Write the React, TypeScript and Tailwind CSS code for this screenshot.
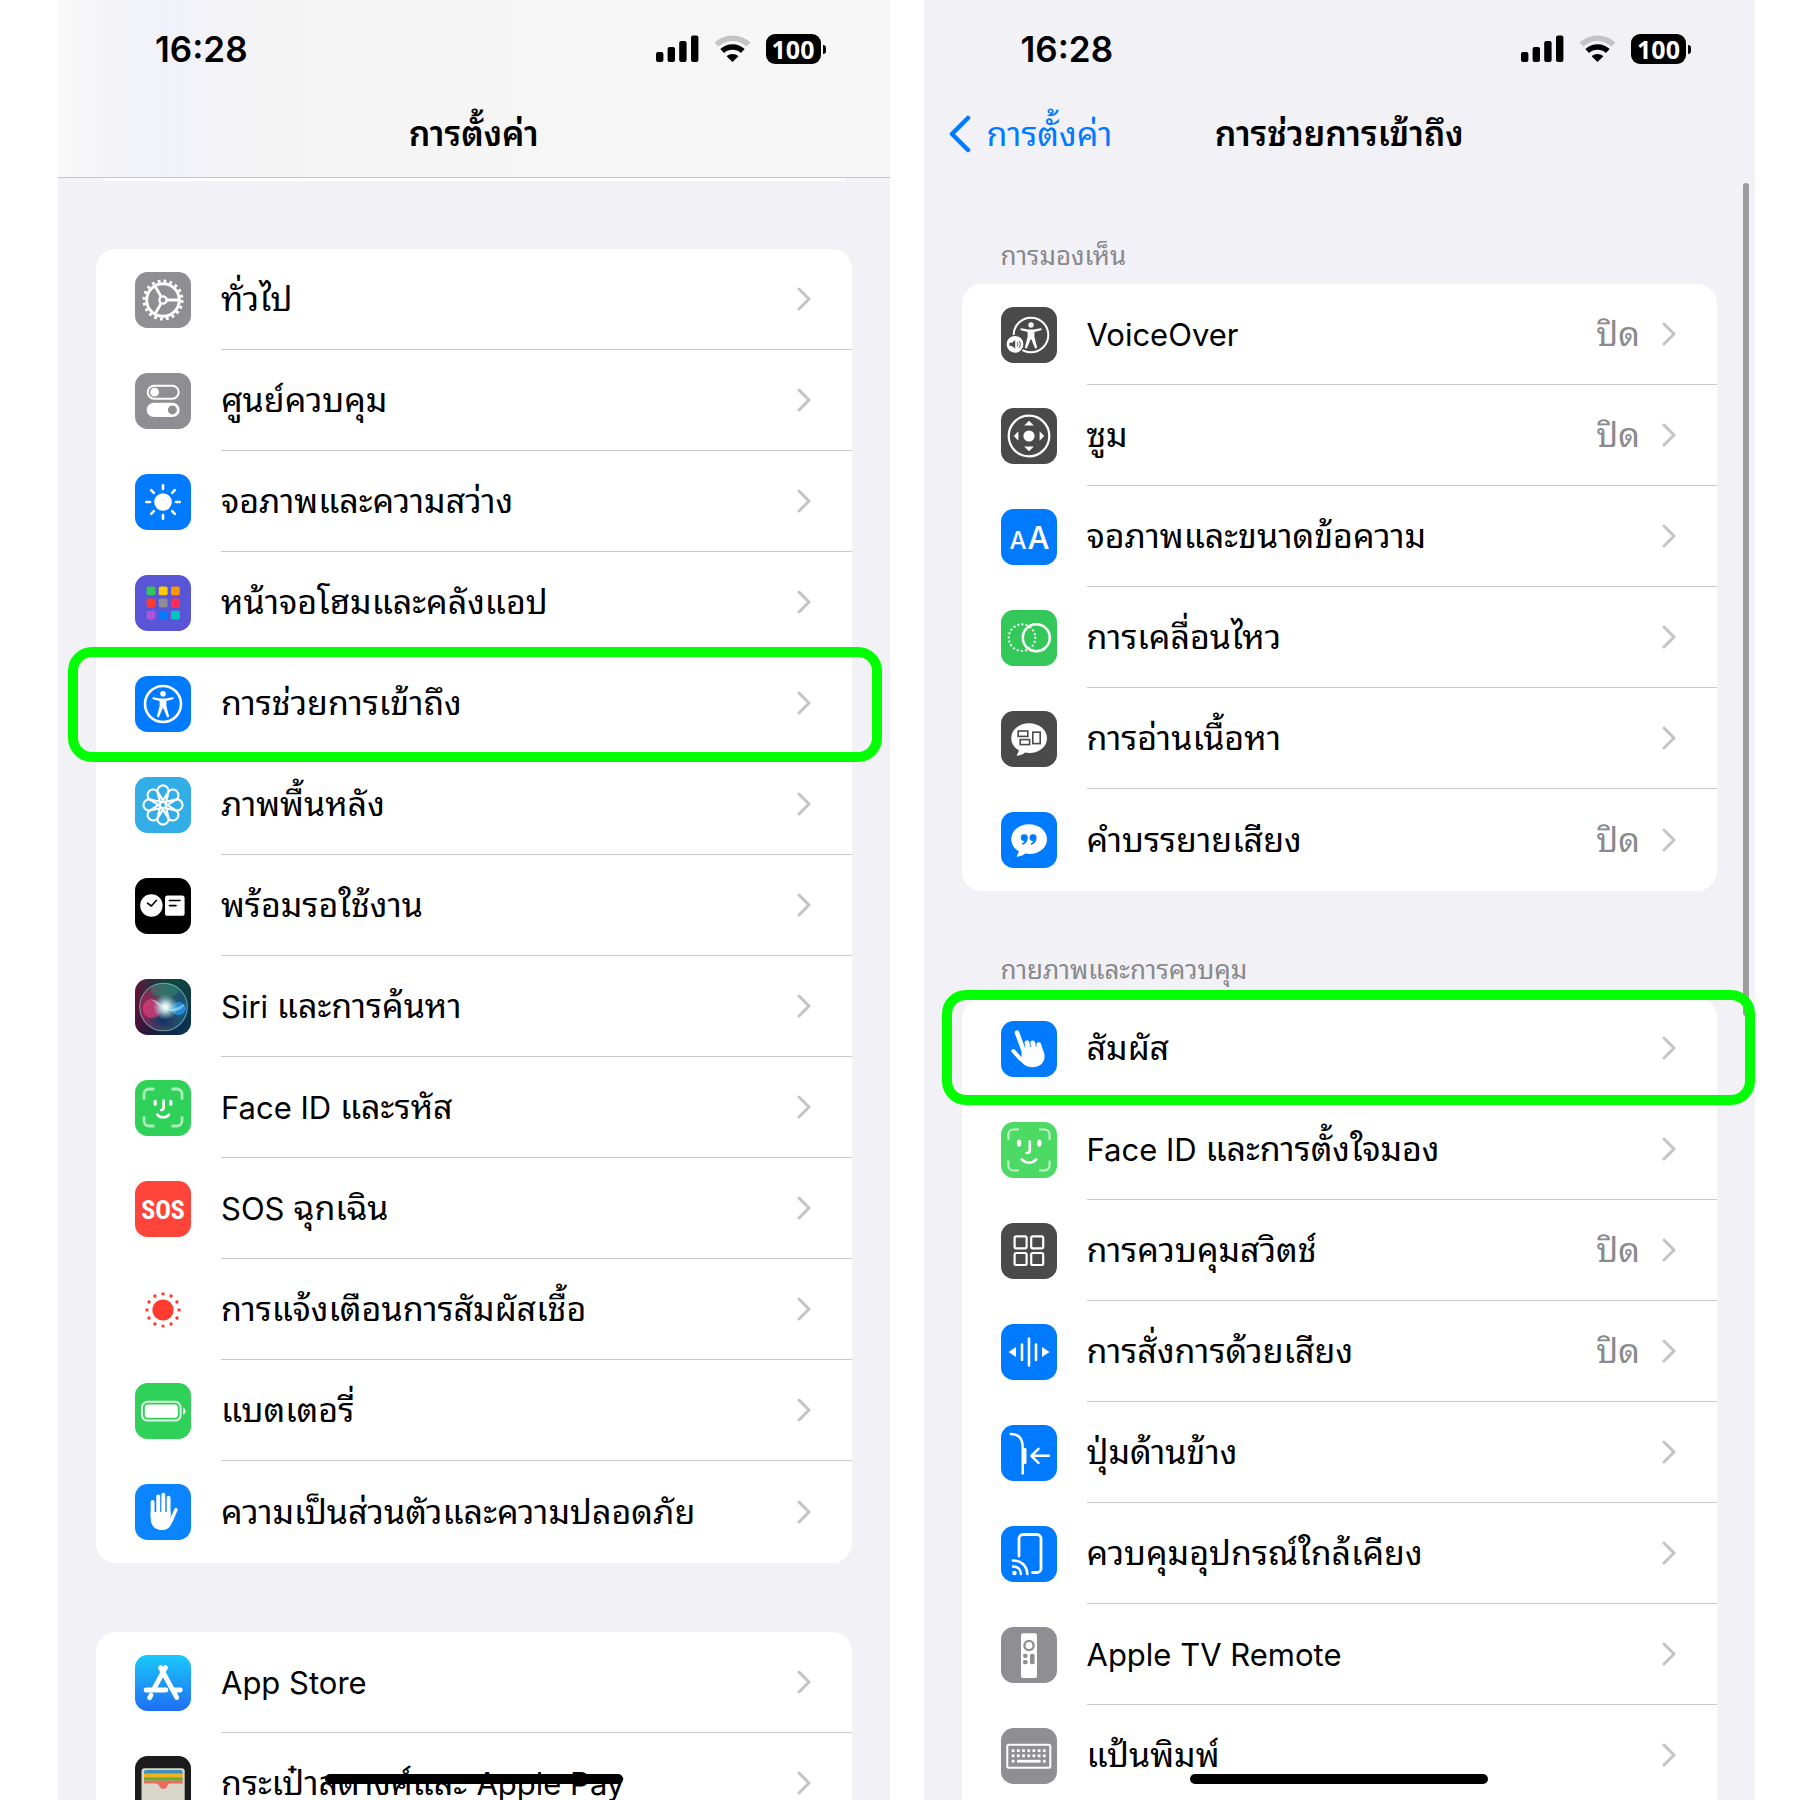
import React from "react";

const DARK = "#4a4a4a";
const BLUE = "#007aff";
const GRAY = "#8e8e93";

type RowItem = {
  id: string;
  label: string;
  icon: React.ReactNode;
  value?: string;
  ring?: string;
};

const Tile = ({ bg, children }: { bg: string; children?: React.ReactNode }) => (
  <svg
    viewBox="0 0 56 56"
    className="size-14 shrink-0"
    fill="none"
    strokeLinecap="round"
    strokeLinejoin="round"
    aria-hidden="true"
  >
    <rect width="56" height="56" rx="12.5" fill={bg} />
    {children}
  </svg>
);

const GearIcon = () => (
  <Tile bg={GRAY}>
    <g stroke="#fff">
      <circle cx="28" cy="28" r="19" strokeWidth="3" strokeDasharray="2.8 3.169" strokeLinecap="butt" />
      <circle cx="28" cy="28" r="16.3" strokeWidth="3" />
      <circle cx="28" cy="28" r="3.6" strokeWidth="2.4" />
      <path d="M32 28H44M26 24.5L20 14M26 31.5L20 42" strokeWidth="2.8" />
    </g>
  </Tile>
);

const TogglesIcon = () => (
  <Tile bg={GRAY}>
    <rect x="12.7" y="12.7" width="31" height="13" rx="6.5" stroke="#fff" strokeWidth="2" />
    <circle cx="19.6" cy="19.2" r="4.4" fill="#fff" />
    <rect x="11.7" y="29.7" width="33" height="14.4" rx="7.2" fill="#fff" />
    <circle cx="37.4" cy="36.9" r="4.5" fill={GRAY} />
  </Tile>
);

const SunIcon = () => (
  <Tile bg={BLUE}>
    <circle cx="28" cy="28" r="8.8" fill="#fff" />
    {[0, 45, 90, 135, 180, 225, 270, 315].map((a) => (
      <path key={a} d="M28 11.3V15" stroke="#fff" strokeWidth="2.6" transform={`rotate(${a} 28 28)`} />
    ))}
  </Tile>
);

const HomeGridIcon = () => {
  const colors = [
    "#34c759", "#ffcc00", "#ff9500",
    "#ff3b30", "#8e8e93", "#ff2d55",
    "#af52de", "#007aff", "#00c7be",
  ];
  return (
    <Tile bg="#5856d6">
      {colors.map((c, i) => (
        <rect
          key={c}
          x={11.6 + (i % 3) * 12.2}
          y={11.4 + Math.floor(i / 3) * 12.2}
          width="8.8"
          height="8.8"
          rx="1.8"
          fill={c}
        />
      ))}
    </Tile>
  );
};

const PERSON =
  "M18.6 21.2L25 22.6H31L37.4 21.2C38.8 21 39.2 22.8 37.9 23.2L31.4 24.9V30L34 40C34.3 41.5 32.3 42 31.8 40.7L28.5 32.5H27.5L24.2 40.7C23.7 42 21.7 41.5 22 40L24.6 30V24.9L18.1 23.2C16.8 22.8 17.2 21 18.6 21.2Z";

const AccessibilityIcon = () => (
  <Tile bg={BLUE}>
    <circle cx="28" cy="28" r="18" stroke="#fff" strokeWidth="2.6" />
    <circle cx="28" cy="17.8" r="2.8" fill="#fff" />
    <path d={PERSON} fill="#fff" />
  </Tile>
);

const FlowerIcon = () => (
  <Tile bg="#32ade6">
    {[0, 45, 90, 135, 180, 225, 270, 315].map((a) => (
      <path
        key={a}
        d="M25.6 28L22.6 15.5A5.6 5.6 0 1 1 33.4 15.5L30.4 28"
        stroke="#fff"
        strokeWidth="2.1"
        transform={`rotate(${a} 28 28)`}
      />
    ))}
    <circle cx="28" cy="28" r="2" fill="#32ade6" />
  </Tile>
);

const StandbyIcon = () => (
  <Tile bg="#000">
    <circle cx="16.4" cy="27.5" r="11.2" fill="#fff" />
    <path d="M12.5 25.2L16.3 28L21.5 22.3" stroke="#000" strokeWidth="1.6" />
    <rect x="30" y="17.4" width="19.6" height="20.4" rx="2.6" fill="#fff" />
    <path d="M34.5 22.5H45M34.5 27.6H41" stroke="#000" strokeWidth="1.6" />
  </Tile>
);

const SiriIcon = () => (
  <Tile bg="url(#siriBg)">
    <defs>
      <linearGradient id="siriBg" x1="0" y1="0.3" x2="1" y2="0.7">
        <stop offset="0" stopColor="#6b0f38" />
        <stop offset="0.45" stopColor="#22183c" />
        <stop offset="1" stopColor="#0a3352" />
      </linearGradient>
      <radialGradient id="siriTop" cx="0.7" cy="0" r="0.8">
        <stop offset="0" stopColor="#0d4a40" />
        <stop offset="1" stopColor="#0d4a40" stopOpacity="0" />
      </radialGradient>
      <linearGradient id="siriOrb" x1="0.1" y1="0.5" x2="1" y2="0.5">
        <stop offset="0" stopColor="#a8285e" />
        <stop offset="0.45" stopColor="#4d5f68" />
        <stop offset="1" stopColor="#0f5d8c" />
      </linearGradient>
      <radialGradient id="siriGlow">
        <stop offset="0" stopColor="#fff" />
        <stop offset="0.3" stopColor="#dff" stopOpacity="0.85" />
        <stop offset="1" stopColor="#9ee" stopOpacity="0" />
      </radialGradient>
      <radialGradient id="siriDark">
        <stop offset="0" stopColor="#12306a" />
        <stop offset="1" stopColor="#12306a" stopOpacity="0" />
      </radialGradient>
    </defs>
    <rect width="56" height="56" rx="12.5" fill="url(#siriTop)" />
    <circle cx="28.5" cy="28" r="23.5" fill="url(#siriOrb)" opacity="0.75" />
    <ellipse cx="28" cy="42" rx="18" ry="11" fill="url(#siriDark)" />
    <ellipse cx="30" cy="11" rx="14" ry="7" fill="#2c8a70" opacity="0.5" />
    <circle cx="17" cy="29.5" r="9.5" fill="#e0407c" opacity="0.65" />
    <ellipse cx="43.5" cy="29.5" rx="7.5" ry="6.5" fill="#2a95ea" opacity="0.8" />
    <path d="M16 20C22 22 26 26 30 29C36 33 42 28 50 25C45 34 37 33 30 30C24 27 20 24 16 20Z" fill="#bff" opacity="0.5" />
    <circle cx="30.5" cy="28" r="12.5" fill="url(#siriGlow)" />
    <circle cx="28.5" cy="28" r="23.8" stroke="#7fc7ba" strokeWidth="1.1" opacity="0.75" />
  </Tile>
);

const FaceIdIcon = () => (
  <Tile bg="#30d158">
    <path
      d="M9 19.5V14A5 5 0 0 1 14 9H19.5M36.5 9H42A5 5 0 0 1 47 14V19.5M47 36.5V41A5 5 0 0 1 42 46H36.5M19.5 46H14A5 5 0 0 1 9 41V36.5"
      stroke="#fff"
      strokeWidth="2.8"
      strokeLinecap="butt"
      opacity="0.6"
    />
    <path d="M20.2 21.3V24.3M35.8 21.3V24.3" stroke="#fff" strokeWidth="3.2" />
    <path d="M28.6 20.5V27.5C28.6 29.3 28 30 26.2 30M22.3 34.6C25.3 38.2 31 38.2 34 34.6" stroke="#fff" strokeWidth="2.6" />
  </Tile>
);

const FaceAttentionIcon = () => (
  <Tile bg="#4cd964">
    <path
      d="M7.4 18V12.5A5 5 0 0 1 12.4 7.5H18M38 7.5H43.6A5 5 0 0 1 48.6 12.5V18M48.6 38.5V43.5A5 5 0 0 1 43.6 48.5H38M18 48.5H12.4A5 5 0 0 1 7.4 43.5V38.5"
      stroke="#fff"
      strokeWidth="2.2"
      strokeLinecap="butt"
      opacity="0.65"
    />
    <ellipse cx="18" cy="21.2" rx="2.2" ry="3.6" fill="#fff" />
    <ellipse cx="38.3" cy="21.2" rx="2.2" ry="3.6" fill="#fff" />
    <path d="M28.8 19.5V28.5C28.8 30.3 28 31 25.6 31M20.8 37.4C24.8 41.8 31.4 41.8 35.2 37.4" stroke="#fff" strokeWidth="2.6" />
  </Tile>
);

const SosIcon = () => (
  <Tile bg="#ff443a">
    <text
      x="28"
      y="37.5"
      textAnchor="middle"
      fill="#fff"
      fontSize="26"
      fontWeight="700"
      fontFamily="'Roboto Condensed', 'Liberation Sans Narrow', Roboto, sans-serif"
    >
      SOS
    </text>
  </Tile>
);

const ExposureIcon = () => (
  <Tile bg="#fff">
    <circle cx="28" cy="28" r="10.6" fill="#ff3b30" />
    {Array.from({ length: 12 }, (_, i) => (
      <circle key={i} cx="28" cy="11.9" r="1.7" fill="#ff3b30" transform={`rotate(${i * 30} 28 28)`} />
    ))}
  </Tile>
);

const BatteryIcon = () => (
  <Tile bg="#30d158">
    <rect x="7" y="18.8" width="38.6" height="18.8" rx="5.6" stroke="#fff" strokeWidth="2" opacity="0.85" />
    <rect x="9.8" y="21.6" width="33" height="13.2" rx="3" fill="#fff" />
    <path d="M48 24.6C51.4 26 51.4 30.4 48 31.8Z" fill="#fff" />
  </Tile>
);

const HandIcon = () => (
  <Tile bg="#0a84ff">
    <path d="M17.6 18V33M23.2 12.5V30M28.3 10.8V30M33.6 13.8V32" stroke="#fff" strokeWidth="3.9" />
    <path d="M41 25.6L36.5 36" stroke="#fff" strokeWidth="3.4" />
    <path d="M15.7 28H35.5V34.5L38.2 35.5C36 42.5 33 46 27 46C19.5 46 15.7 41.5 15.7 34Z" fill="#fff" />
  </Tile>
);

const AppStoreIcon = () => (
  <Tile bg="url(#storeBg)">
    <defs>
      <linearGradient id="storeBg" x1="0" y1="0" x2="0" y2="1">
        <stop offset="0" stopColor="#1ac8fc" />
        <stop offset="1" stopColor="#1e6ff2" />
      </linearGradient>
    </defs>
    <path d="M30.5 12.5L19.5 32.8M25.5 12.5L41.8 42.6M11 35H31M39.5 35H45.3M16 40.2L14.6 42.8" stroke="#fff" strokeWidth="4.8" />
  </Tile>
);

const WalletIcon = () => (
  <Tile bg="#1c1c1c">
    <rect x="6.5" y="12.3" width="43.2" height="40" rx="3" fill="#d9d6cb" />
    <path d="M9 16A2 2 0 0 1 11 14H45.6A2 2 0 0 1 47.6 16V18H9Z" fill="#4091b8" />
    <path d="M9 17.6H47.6V21.2H9Z" fill="#f2b01e" />
    <path d="M9 21.2H47.6V24.8H9Z" fill="#6aa83c" />
    <path d="M9 24.8H47.6V27.6H35.5C33.6 27.6 33 28.6 32.3 30C30.6 33.8 26 33.8 24.3 30C23.6 28.6 23 27.6 21 27.6H9Z" fill="#f0675c" />
  </Tile>
);

const VoiceOverIcon = () => (
  <Tile bg={DARK}>
    <circle cx="30" cy="28" r="17.3" stroke="#fff" strokeWidth="2" />
    <circle cx="30" cy="18" r="2.7" fill="#fff" />
    <path d={PERSON} fill="#fff" transform="translate(2 0)" />
    <circle cx="14" cy="37.3" r="9" fill="#fff" stroke={DARK} strokeWidth="1.2" />
    <path d="M8.5 35.8H11L14.2 33V41.8L11 39H8.5Z" fill={DARK} />
    <path d="M16.2 35.6C17 36.8 17 38 16.2 39.2M18.2 34.2C19.8 36.4 19.8 38.4 18.2 40.6" stroke={DARK} strokeWidth="1" />
  </Tile>
);

const ZoomIcon = () => (
  <Tile bg={DARK}>
    <circle cx="28" cy="28" r="20.3" stroke="#fff" strokeWidth="2.2" />
    <circle cx="28" cy="28" r="5.6" fill="#fff" />
    {[0, 90, 180, 270].map((a) => (
      <path key={a} d="M28 12.8L32.8 17.4H23.2Z" fill="#fff" transform={`rotate(${a} 28 28)`} />
    ))}
  </Tile>
);

const TextSizeIcon = () => (
  <Tile bg={BLUE}>
    <g fill="#fff" fontFamily="Inter, sans-serif" fontWeight="500" textAnchor="middle">
      <text x="17" y="40" fontSize="24">A</text>
      <text x="37.4" y="40" fontSize="31">A</text>
    </g>
  </Tile>
);

const MotionIcon = () => (
  <Tile bg="#34c759">
    <circle cx="21" cy="27.7" r="13.3" stroke="#fff" strokeWidth="2.2" strokeDasharray="0.1 4.078" />
    <circle cx="35.3" cy="27.7" r="13.5" stroke="#fff" strokeWidth="2.5" />
  </Tile>
);

const BUBBLE =
  "M28 12.3C38.2 12.3 46 18.7 46 27.2C46 35.7 38.2 42 28.4 42C26.8 42 25.5 41.9 24.2 41.6C22 43.3 19 44.6 16.6 44.7C15.6 44.7 15.6 43.8 16.1 43.2C17.2 41.9 17.8 40.4 17.6 39C13 36.5 10.3 32.2 10.3 27.2C10.3 18.7 18 12.3 28 12.3Z";

const SpokenIcon = () => (
  <Tile bg={DARK}>
    <path d={BUBBLE} fill="#fff" />
    <g stroke={DARK} strokeWidth="1.6" strokeLinejoin="miter">
      <rect x="17.2" y="20" width="9.6" height="5.4" />
      <rect x="19.2" y="28.6" width="9.4" height="5" />
      <rect x="31.8" y="21.2" width="7.4" height="11.4" />
    </g>
  </Tile>
);

const QUOTE =
  "M19.8 26A3.5 3.5 0 1 1 26.8 25.6C26.8 29 25 31.6 22.3 32.6C21 33 20.5 31.6 21.6 31C22.7 30.4 23.4 29.7 23.6 29C21.4 29.4 19.8 28 19.8 26Z";

const AudioDescIcon = () => (
  <Tile bg={BLUE}>
    <path d={BUBBLE} fill="#fff" />
    <path d={QUOTE} fill={BLUE} />
    <path d={QUOTE} fill={BLUE} transform="translate(8.8 0)" />
  </Tile>
);

const TouchIcon = () => (
  <Tile bg={BLUE}>
    <path d="M16 11.6L22.4 29" stroke="#fff" strokeWidth="4.6" />
    <path d="M12.4 30L19.5 38" stroke="#fff" strokeWidth="4" />
    <path d="M26 21.8L27.5 30M31.8 21.8L33 30M37.8 23.6L38.8 30" stroke="#fff" strokeWidth="4.8" />
    <path
      d="M20.4 27L36 25.5L40 24C42 29 44 33 43.6 36.5C42.8 42.5 38 46.3 31.5 46.3C24.5 46.3 21.5 42 17.8 38.5L20.6 35.5Z"
      fill="#fff"
    />
  </Tile>
);

const SwitchIcon = () => (
  <Tile bg={DARK}>
    {[13.4, 30].map((y) =>
      [13.6, 30.2].map((x) => (
        <rect key={`${x}-${y}`} x={x} y={y} width="12" height="12" rx="1.6" stroke="#fff" strokeWidth="2.2" />
      ))
    )}
  </Tile>
);

const VoiceControlIcon = () => (
  <Tile bg={BLUE}>
    <path d="M28 14.5V41.5M21 20.5V36M35 20.5V36" stroke="#fff" strokeWidth="2.6" />
    <path d="M7.5 28L15 23V33ZM48.5 28L41 23V33Z" fill="#fff" />
  </Tile>
);

const SideButtonIcon = () => (
  <Tile bg={BLUE}>
    <path d="M9.8 9C18 9 21.7 13 21.7 22V48.5" stroke="#fff" strokeWidth="2.5" />
    <path d="M22 23H24.2C25 23 25.5 23.5 25.5 24.3V37.7C25.5 38.5 25 39 24.2 39H22Z" fill="#fff" />
    <path d="M48 30.8H30.5M37.5 23.8L30.3 30.8L37.5 37.8" stroke="#fff" strokeWidth="2.5" />
  </Tile>
);

const NearbyIcon = () => (
  <Tile bg={BLUE}>
    <path
      d="M18 30V12.5A4 4 0 0 1 22 8.5H36A4 4 0 0 1 40 12.5V42.5A4 4 0 0 1 36 46.5H31.5"
      stroke="#fff"
      strokeWidth="2.8"
    />
    <circle cx="13.4" cy="47" r="2.3" fill="#fff" />
    <path d="M12 40.5C16.5 40.5 19.7 43.5 19.9 48M12 34.5C20.5 34.5 26 40 26.3 48" stroke="#fff" strokeWidth="2.6" />
  </Tile>
);

const RemoteIcon = () => (
  <Tile bg={GRAY}>
    <rect x="20" y="6.3" width="16" height="44.6" rx="2" fill="#fff" />
    <circle cx="28" cy="18.5" r="4.6" stroke={GRAY} strokeWidth="2.3" />
    <g fill={GRAY}>
      <rect x="22" y="26.7" width="4.6" height="4.2" rx="1.8" />
      <rect x="22" y="33" width="4.6" height="4.2" rx="1.8" />
      <rect x="29" y="26.7" width="4.6" height="10.5" rx="1.8" />
    </g>
  </Tile>
);

const KeyboardIcon = () => (
  <Tile bg={GRAY}>
    <rect x="6.3" y="16.7" width="43" height="23" rx="1.5" stroke="#fff" strokeWidth="2" />
    <g fill="#fff">
      {[0, 1, 2, 3, 4, 5, 6].map((i) => (
        <React.Fragment key={i}>
          <rect x={10.7 + i * 5.2} y="21.3" width="2.8" height="2.8" />
          <rect x={10.7 + i * 5.2} y="26.4" width="2.8" height="2.8" />
        </React.Fragment>
      ))}
      <rect x="10.7" y="31.8" width="2.8" height="2.8" />
      <rect x="16" y="31.8" width="23.6" height="2.8" />
      <rect x="41.9" y="31.8" width="2.8" height="2.8" />
    </g>
  </Tile>
);

const mainRows: RowItem[] = [
  { id: "general", label: "ทั่วไป", icon: <GearIcon /> },
  { id: "control-center", label: "ศูนย์ควบคุม", icon: <TogglesIcon /> },
  { id: "display", label: "จอภาพและความสว่าง", icon: <SunIcon /> },
  { id: "home-screen", label: "หน้าจอโฮมและคลังแอป", icon: <HomeGridIcon /> },
  {
    id: "accessibility",
    label: "การช่วยการเข้าถึง",
    icon: <AccessibilityIcon />,
    ring: "-top-[6px] -bottom-[8px] -left-[28px] -right-[30px]",
  },
  { id: "wallpaper", label: "ภาพพื้นหลัง", icon: <FlowerIcon /> },
  { id: "standby", label: "พร้อมรอใช้งาน", icon: <StandbyIcon /> },
  { id: "siri", label: "Siri และการค้นหา", icon: <SiriIcon /> },
  { id: "face-id", label: "Face ID และรหัส", icon: <FaceIdIcon /> },
  { id: "sos", label: "SOS ฉุกเฉิน", icon: <SosIcon /> },
  { id: "exposure", label: "การแจ้งเตือนการสัมผัสเชื้อ", icon: <ExposureIcon /> },
  { id: "battery", label: "แบตเตอรี่", icon: <BatteryIcon /> },
  { id: "privacy", label: "ความเป็นส่วนตัวและความปลอดภัย", icon: <HandIcon /> },
];

const storeRows: RowItem[] = [
  { id: "app-store", label: "App Store", icon: <AppStoreIcon /> },
  { id: "wallet", label: "กระเป๋าสตางค์และ Apple Pay", icon: <WalletIcon /> },
];

const visionRows: RowItem[] = [
  { id: "voiceover", label: "VoiceOver", icon: <VoiceOverIcon />, value: "ปิด" },
  { id: "zoom", label: "ซูม", icon: <ZoomIcon />, value: "ปิด" },
  { id: "text-size", label: "จอภาพและขนาดข้อความ", icon: <TextSizeIcon /> },
  { id: "motion", label: "การเคลื่อนไหว", icon: <MotionIcon /> },
  { id: "spoken", label: "การอ่านเนื้อหา", icon: <SpokenIcon /> },
  { id: "audio-desc", label: "คำบรรยายเสียง", icon: <AudioDescIcon />, value: "ปิด" },
];

const physicalRows: RowItem[] = [
  {
    id: "touch",
    label: "สัมผัส",
    icon: <TouchIcon />,
    ring: "-top-[8px] -bottom-[6px] -left-[20px] -right-[38px]",
  },
  { id: "face-attention", label: "Face ID และการตั้งใจมอง", icon: <FaceAttentionIcon /> },
  { id: "switch", label: "การควบคุมสวิตช์", icon: <SwitchIcon />, value: "ปิด" },
  { id: "voice-control", label: "การสั่งการด้วยเสียง", icon: <VoiceControlIcon />, value: "ปิด" },
  { id: "side-button", label: "ปุ่มด้านข้าง", icon: <SideButtonIcon /> },
  { id: "nearby", label: "ควบคุมอุปกรณ์ใกล้เคียง", icon: <NearbyIcon /> },
  { id: "tv-remote", label: "Apple TV Remote", icon: <RemoteIcon /> },
  { id: "keyboard", label: "แป้นพิมพ์", icon: <KeyboardIcon /> },
];

const StatusBar = () => (
  <div className="flex h-[98px] items-center justify-between pl-[97px] pr-16">
    <time className="text-[35px] leading-10 font-semibold">16:28</time>
    <div className="flex items-center gap-[15px]">
      <svg viewBox="0 0 43 28" className="h-7 w-[43px]" aria-label="สัญญาณมือถือ">
        <rect x="0" y="17" width="7.4" height="10" rx="2" />
        <rect x="11.6" y="12" width="7.4" height="15" rx="2" />
        <rect x="23.2" y="6" width="7.4" height="21" rx="2" />
        <rect x="35" y="0.5" width="7.4" height="26.5" rx="2" />
      </svg>
      <svg viewBox="0 0 37 28" className="h-7 w-[37px]" aria-label="Wi-Fi">
        <path d="M2.5 9.5C11.5 1 25.5 1 34.5 9.5" fill="none" stroke="#c4c4c6" strokeWidth="5.5" />
        <path d="M8.2 16C14 10.6 23 10.6 28.8 16" fill="none" stroke="#000" strokeWidth="5.5" />
        <path d="M12.6 21.3C16 18.3 21 18.3 24.4 21.3L18.5 27Z" />
      </svg>
      <div className="flex items-center gap-[2px]">
        <span className="flex h-[30px] w-[55px] items-center justify-center rounded-[9px] bg-black font-['Open_Sans',sans-serif] text-[25px] leading-[30px] font-bold text-white">
          100
        </span>
        <span className="h-[9px] w-[3px] rounded-r-full bg-black" />
      </div>
    </div>
  </div>
);

// Latin runs look larger than Thai at the same size, so they are set smaller
const Label = ({ text }: { text: string }) => (
  <span className="flex-1 text-[34px] leading-[48px] whitespace-nowrap">
    {text.split(/([A-Za-z]+(?: [A-Za-z]+)* ?)/).map((part, i) =>
      i % 2 ? (
        <span key={i} className="text-[31px]">
          {part}
        </span>
      ) : (
        part
      )
    )}
  </span>
);

const Row = ({ item, last }: { item: RowItem; last: boolean }) => (
  <li className="relative">
    <button type="button" className="flex h-[101px] w-full items-center gap-[30px] pl-[39px] text-left">
      {item.icon}
      <span
        className={`flex h-full min-w-0 flex-1 items-center pr-[41px] ${
          last ? "" : "border-b border-[#c9c9cc]"
        }`}
      >
        <Label text={item.label} />
        {item.value && <span className="mr-[22px] text-[34px] leading-[48px] text-[#8a8a8e]">{item.value}</span>}
        <svg viewBox="0 0 14 24" className="h-6 w-3.5 shrink-0" aria-hidden="true">
          <path
            d="M2 2L12 12L2 22"
            fill="none"
            stroke="#c4c4c6"
            strokeWidth="3"
            strokeLinecap="round"
            strokeLinejoin="round"
          />
        </svg>
      </span>
    </button>
    {item.ring && (
      <span
        className={`pointer-events-none absolute z-20 rounded-[24px] border-[10px] border-[#00ff00] ${item.ring}`}
      />
    )}
  </li>
);

const Group = ({ items, open }: { items: RowItem[]; open?: boolean }) => (
  <ul className={`mx-[38px] bg-white ${open ? "rounded-t-[20px]" : "rounded-[20px] pb-px"}`}>
    {items.map((item, i) => (
      <Row key={item.id} item={item} last={!open && i === items.length - 1} />
    ))}
  </ul>
);

const HomeIndicator = () => (
  <span className="absolute bottom-4 left-1/2 z-10 h-[10px] w-[298px] -translate-x-1/2 rounded-full bg-black" />
);

const App = () => {
  return (
    <main className="grid h-screen grid-cols-2 gap-[34px] overflow-hidden bg-white pr-[45px] pl-[58px] font-['Inter','Thonburi','Noto_Sans_Thai_Looped','Loma','Garuda','Waree','Noto_Sans_Thai',sans-serif] text-black">
      <section className="relative h-screen bg-[#f2f1f6]">
        <header className="border-b border-[#c6c6c9] bg-[linear-gradient(90deg,#f9f9f9_0%,#f4f4f8_7%,#f0f1fa_13%,#f3f3f6_19%,#f5f5f5_30%,#f7f7f7_100%)]">
          <StatusBar />
          <div className="flex h-[79px] items-start justify-center pt-3">
            <h1 className="text-[34px] leading-[48px] font-semibold">การตั้งค่า</h1>
          </div>
        </header>
        <div className="mx-[45px] h-[3px] rounded-b-[20px] bg-white" />
        <div className="mt-[68px] flex flex-col gap-[69px]">
          <Group items={mainRows} />
          <Group items={storeRows} open />
        </div>
        <HomeIndicator />
      </section>

      <section className="relative h-screen bg-[#f2f1f6]">
        <header>
          <StatusBar />
          <div className="grid h-20 grid-cols-[1fr_auto_1fr] items-start pt-3">
            <a href="#settings" className="flex items-center gap-4 pl-6 text-[34px] leading-[48px] text-[#007aff]">
              <svg viewBox="0 0 23 38" className="h-[38px] w-[23px]" aria-hidden="true">
                <path
                  d="M20 3L4 19L20 35"
                  fill="none"
                  stroke="currentColor"
                  strokeWidth="4.5"
                  strokeLinecap="round"
                  strokeLinejoin="round"
                />
              </svg>
              การตั้งค่า
            </a>
            <h1 className="text-[34px] leading-[48px] font-semibold">การช่วยการเข้าถึง</h1>
          </div>
        </header>
        <h2 className="mt-[58px] mb-2 pl-[77px] text-[26px] leading-10 text-[#88888c]">การมองเห็น</h2>
        <Group items={visionRows} />
        <h2 className="mt-[59px] mb-2 pl-[77px] text-[26px] leading-10 text-[#88888c]">กายภาพและการควบคุม</h2>
        <Group items={physicalRows} open />
        <span className="absolute top-[183px] right-[6px] h-[833px] w-[6px] rounded-full bg-[#9c9c9e]" />
        <HomeIndicator />
      </section>
    </main>
  );
};

export default App;
